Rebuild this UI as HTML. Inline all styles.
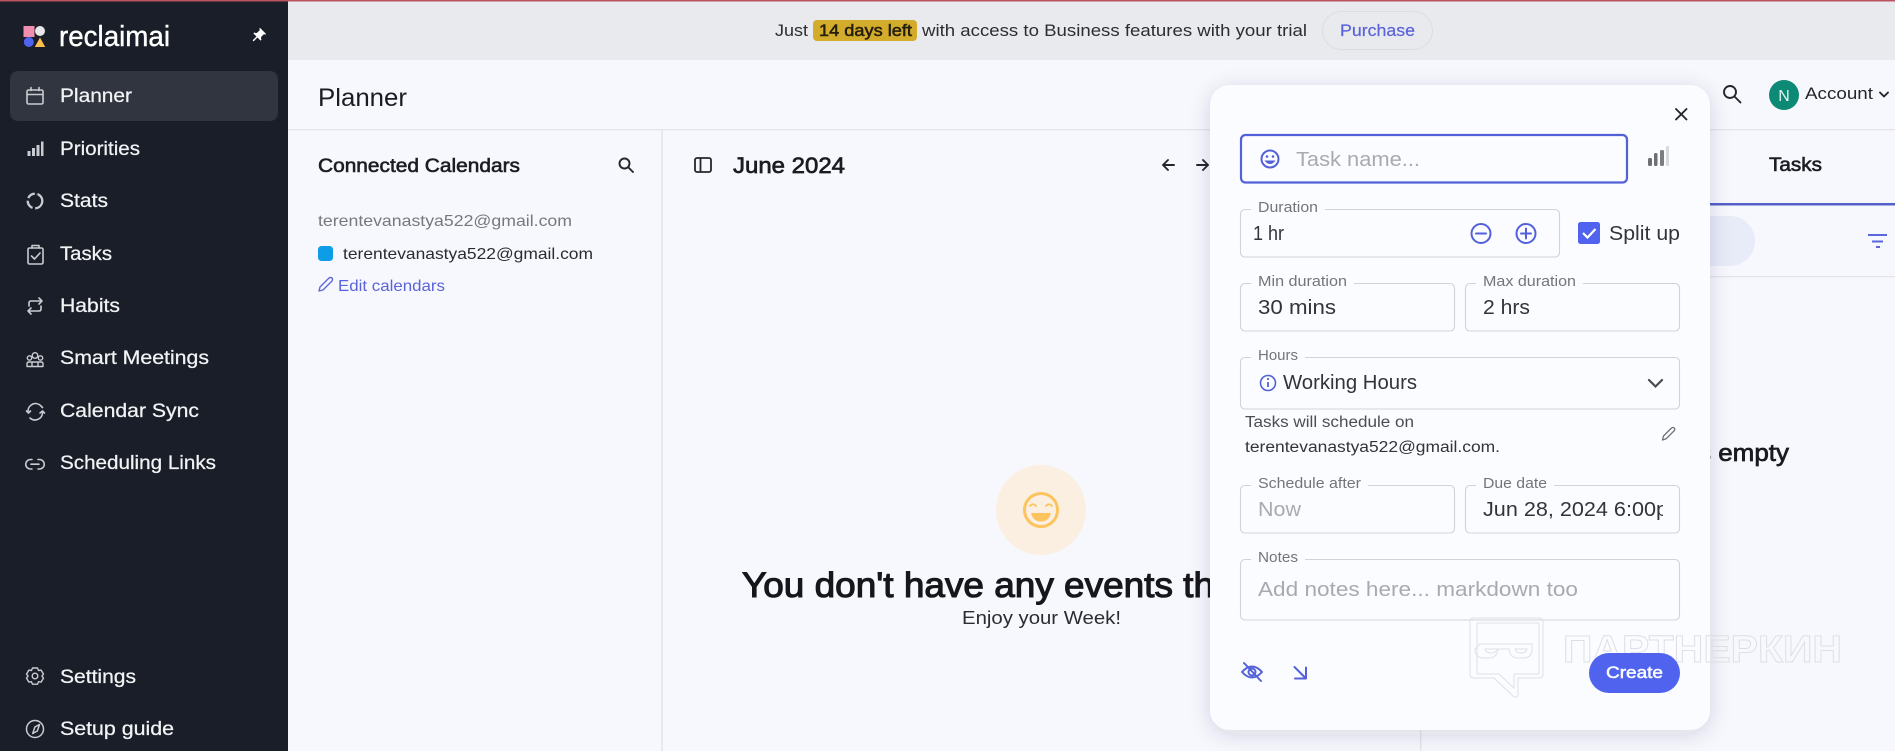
<!DOCTYPE html>
<html lang="en"><head><meta charset="utf-8"><title>Planner</title>
<style>
html,body{margin:0;padding:0;width:1895px;height:751px;overflow:hidden;background:#f7f8fd}
svg{position:absolute;left:0;top:0;display:block}
text{font-family:"Liberation Sans",sans-serif;white-space:pre}
.n{font-size:19.5px;fill:#f2f3f5;stroke:#f2f3f5;stroke-width:.25}
.l{font-size:15px;fill:#74757a}
.v{font-size:20.5px;fill:#33343a}
.g{font-size:20.5px;fill:#a9aaae}
.b{fill:none;stroke:#d2d3d7;stroke-width:1.1}
.si{fill:none;stroke:#c9cbd0;stroke-width:1.6;stroke-linecap:round;stroke-linejoin:round}
.bi{fill:none;stroke:#5361d8;stroke-width:2;stroke-linecap:round;stroke-linejoin:round}
.d{fill:none;stroke:#25262b;stroke-width:1.9;stroke-linecap:round;stroke-linejoin:round}
</style></head><body>
<svg width="1895" height="751" viewBox="0 0 1895 751" xmlns="http://www.w3.org/2000/svg">
<defs>
<filter id="sh" x="-15%" y="-15%" width="130%" height="130%"><feDropShadow dx="0" dy="4" stdDeviation="11" flood-color="#30364e" flood-opacity=".16"/></filter>
<clipPath id="dc"><rect x="1470" y="490" width="193" height="40"/></clipPath>
</defs>
<rect width="1895" height="751" fill="#f7f8fd"/>
<!-- banner -->
<rect x="288" y="0" width="1607" height="60" fill="#e9eaee"/>
<rect width="1895" height="1.5" fill="#bb5260"/>
<text x="775" y="36" font-size="17" fill="#2c2d33" textLength="33" lengthAdjust="spacingAndGlyphs">Just</text>
<rect x="813" y="20" width="104" height="21" rx="4" fill="#d4ac2c"/>
<text x="819" y="36" font-size="17" fill="#241f0c" stroke="#241f0c" stroke-width=".55" textLength="93" lengthAdjust="spacingAndGlyphs">14 days left</text>
<text x="922" y="36" font-size="17" fill="#2c2d33" textLength="385" lengthAdjust="spacingAndGlyphs">with access to Business features with your trial</text>
<rect x="1322.5" y="11.5" width="110" height="38" rx="19" fill="none" stroke="#dcdde3"/>
<text x="1340" y="36" font-size="17" fill="#5a63d8" stroke="#5a63d8" stroke-width=".2" textLength="75" lengthAdjust="spacingAndGlyphs">Purchase</text>
<!-- header -->
<text x="318" y="106" font-size="25" fill="#1b1c20" textLength="89" lengthAdjust="spacingAndGlyphs">Planner</text>
<rect x="288" y="129" width="1607" height="1.3" fill="#e4e5ea"/>
<g class="d"><circle cx="1730" cy="92" r="6"/><path d="M1734.500 96.500l6 6"/></g>
<circle cx="1784" cy="95" r="15" fill="#0c8a76"/>
<text x="1784" y="101" font-size="16" fill="#e6f5f2" text-anchor="middle">N</text>
<text x="1805" y="99" font-size="17" fill="#25262b" textLength="68" lengthAdjust="spacingAndGlyphs">Account</text>
<path d="M1880 92.500l4 4 4-4" class="d"/>
<!-- left calendars panel -->
<text x="318" y="172" font-size="19.500" fill="#1c1d22" stroke="#1c1d22" stroke-width=".6" textLength="202" lengthAdjust="spacingAndGlyphs">Connected Calendars</text>
<g class="d"><circle cx="624.500" cy="163.500" r="5"/><path d="M628.500 167.500l4.500 4.500"/></g>
<text x="318" y="226" font-size="16" fill="#77787d" textLength="254" lengthAdjust="spacingAndGlyphs">terentevanastya522@gmail.com</text>
<rect x="318" y="246" width="15" height="15" rx="3.500" fill="#0d9ce6"/>
<text x="343" y="259" font-size="16" fill="#2a2b30" textLength="250" lengthAdjust="spacingAndGlyphs">terentevanastya522@gmail.com</text>
<path d="M319 291l1-4 9-9q2-1 3 0t0 3l-9 9z" fill="none" stroke="#6068d8" stroke-width="1.400" stroke-linejoin="round"/>
<text x="338" y="291" font-size="16" fill="#5a63d8" textLength="107" lengthAdjust="spacingAndGlyphs">Edit calendars</text>
<rect x="661" y="130" width="2" height="621" fill="#e8e9ef"/>
<rect x="1420" y="700" width="1.500" height="51" fill="#e4e5ea"/>
<!-- center -->
<g fill="none" stroke="#25262b" stroke-width="1.800"><rect x="695" y="158" width="16" height="14" rx="2"/><path d="M700.500 158v14"/></g>
<text x="733" y="173" font-size="22.500" fill="#1b1c20" stroke="#1b1c20" stroke-width=".7" textLength="112" lengthAdjust="spacingAndGlyphs">June 2024</text>
<path d="M1174 165h-11m5-5l-5 5 5 5" class="d"/>
<path d="M1197 165h11m-5-5l5 5-5 5" class="d"/>
<circle cx="1041" cy="510" r="45" fill="#faefe0"/>
<g fill="none" stroke="#fdc35c" stroke-width="3" stroke-linecap="round"><circle cx="1041" cy="510" r="16.500"/></g>
<g fill="none" stroke="#fdc35c" stroke-width="1.800" stroke-linecap="round"><path d="M1030 506q3-3.500 6 0M1046 506q3-3.500 6 0"/></g>
<path d="M1031 513h20q-2 8.500-10 8.500t-10-8.500z" fill="#fdc35c"/>
<text x="742" y="597" font-size="35" fill="#16171b" stroke="#16171b" stroke-width="1.100" textLength="472" lengthAdjust="spacingAndGlyphs">You don't have any events th</text>
<text x="962" y="624" font-size="18" fill="#2b2c31" textLength="159" lengthAdjust="spacingAndGlyphs">Enjoy your Week!</text>
<!-- right panel -->
<text x="1769" y="171" font-size="19" fill="#1c1d22" stroke="#1c1d22" stroke-width=".6" textLength="53" lengthAdjust="spacingAndGlyphs">Tasks</text>
<rect x="1600" y="203" width="295" height="2.500" fill="#5361c8"/>
<rect x="1500" y="216" width="255" height="50" rx="25" fill="#e8ebf8"/>
<path d="M1868 235h19M1872 241.500h11M1876 247h4" fill="none" stroke="#5a66dc" stroke-width="2"/>
<rect x="1600" y="276" width="295" height="1.300" fill="#e4e5ea"/>
<text x="1698" y="461" font-size="24" fill="#1a1b20" stroke="#1a1b20" stroke-width=".7" textLength="91" lengthAdjust="spacingAndGlyphs">s empty</text>
<!-- modal -->
<rect x="1210" y="85" width="500" height="645" rx="20" fill="#fbfcff" filter="url(#sh)"/>
<path d="M1676 109l10.500 10.500M1686.500 109l-10.500 10.500" class="d"/>
<rect x="1241" y="135" width="386" height="47.500" rx="4.500" fill="none" stroke="#5361d8" stroke-width="2.200"/>
<g class="bi"><circle cx="1270" cy="159" r="8.500"/></g>
<circle cx="1267" cy="156.500" r="1.300" fill="#5361d8"/><circle cx="1273" cy="156.500" r="1.300" fill="#5361d8"/>
<path d="M1265.500 161q4.500 5 9 0z" fill="#5361d8" stroke="#5361d8"/>
<text x="1296" y="166" class="g" textLength="124" lengthAdjust="spacingAndGlyphs">Task name...</text>
<g><rect x="1648" y="158" width="4" height="8" rx="1.500" fill="#6e6f73"/><rect x="1654" y="153" width="3.500" height="13" rx="1.500" fill="#6e6f73"/><rect x="1660" y="150" width="4" height="16" rx="1.500" fill="#7c7d81"/><rect x="1666" y="146" width="3" height="20" rx="1" fill="#d8d9dd"/></g>

<!-- Duration -->
<rect x="1240.500" y="209.500" width="319" height="47.500" rx="4.500" class="b"/>
<rect x="1251" y="205" width="74" height="8" fill="#fbfcff"/>
<text x="1258" y="212" class="l" textLength="60" lengthAdjust="spacingAndGlyphs">Duration</text>
<text x="1253" y="240" class="v" textLength="31" lengthAdjust="spacingAndGlyphs">1 hr</text>
<g class="bi"><circle cx="1481" cy="233.500" r="9.500"/><path d="M1476 233.500h10"/><circle cx="1526" cy="233.500" r="9.500"/><path d="M1521 233.500h10M1526 228.500v10"/></g>
<rect x="1578" y="222" width="22" height="22" rx="2.500" fill="#5062ee"/>
<path d="M1583 233l4.500 4.500 8-8.500" fill="none" stroke="#fff" stroke-width="2.200"/>
<text x="1609" y="240" class="v" textLength="71" lengthAdjust="spacingAndGlyphs">Split up</text>
<!-- Min / Max -->
<rect x="1240.500" y="283.500" width="214" height="47.500" rx="4.500" class="b"/>
<rect x="1251" y="279" width="103" height="8" fill="#fbfcff"/>
<text x="1258" y="286" class="l" textLength="89" lengthAdjust="spacingAndGlyphs">Min duration</text>
<text x="1258" y="314" class="v" textLength="78" lengthAdjust="spacingAndGlyphs">30 mins</text>
<rect x="1465.500" y="283.500" width="214" height="47.500" rx="4.500" class="b"/>
<rect x="1476" y="279" width="107" height="8" fill="#fbfcff"/>
<text x="1483" y="286" class="l" textLength="93" lengthAdjust="spacingAndGlyphs">Max duration</text>
<text x="1483" y="314" class="v" textLength="47" lengthAdjust="spacingAndGlyphs">2 hrs</text>
<!-- Hours -->
<rect x="1240.500" y="357.500" width="439" height="51.500" rx="4.500" class="b"/>
<rect x="1251" y="353" width="54" height="8" fill="#fbfcff"/>
<text x="1258" y="360" class="l" textLength="40" lengthAdjust="spacingAndGlyphs">Hours</text>
<circle cx="1268" cy="383" r="7.500" fill="none" stroke="#5361d8" stroke-width="1.600"/>
<path d="M1268 382v5" stroke="#5361d8" stroke-width="1.800"/><circle cx="1268" cy="379" r="1.100" fill="#5361d8"/>
<text x="1283" y="389" class="v" textLength="134" lengthAdjust="spacingAndGlyphs">Working Hours</text>
<path d="M1649 380l6.500 6.500 6.500-6.500" fill="none" stroke="#4a4b50" stroke-width="2.200" stroke-linecap="round"/>
<text x="1245" y="427" font-size="15.500" fill="#4c4d52" textLength="169" lengthAdjust="spacingAndGlyphs">Tasks will schedule on</text>
<text x="1245" y="452" font-size="15.500" fill="#33343a" textLength="255" lengthAdjust="spacingAndGlyphs">terentevanastya522@gmail.com.</text>
<path d="M1662.500 440l1-4 8-8q1.500-1 2.700 0t0 2.700l-8 8z" fill="none" stroke="#6f7075" stroke-width="1.300" stroke-linejoin="round"/>
<!-- Schedule / Due -->
<rect x="1240.500" y="485.500" width="214" height="47.500" rx="4.500" class="b"/>
<rect x="1251" y="481" width="117" height="8" fill="#fbfcff"/>
<text x="1258" y="488" class="l" textLength="103" lengthAdjust="spacingAndGlyphs">Schedule after</text>
<text x="1258" y="516" class="g" textLength="43" lengthAdjust="spacingAndGlyphs">Now</text>
<rect x="1465.500" y="485.500" width="214" height="47.500" rx="4.500" class="b"/>
<rect x="1476" y="481" width="78" height="8" fill="#fbfcff"/>
<text x="1483" y="488" class="l" textLength="64" lengthAdjust="spacingAndGlyphs">Due date</text>
<g clip-path="url(#dc)"><text x="1483" y="516" class="v" textLength="203" lengthAdjust="spacingAndGlyphs">Jun 28, 2024 6:00pm</text></g>
<!-- Notes -->
<rect x="1240.500" y="559.500" width="439" height="60.500" rx="4.500" class="b"/>
<rect x="1251" y="555" width="54" height="8" fill="#fbfcff"/>
<text x="1258" y="562" class="l" textLength="40" lengthAdjust="spacingAndGlyphs">Notes</text>
<text x="1258" y="596" class="g" textLength="320" lengthAdjust="spacingAndGlyphs">Add notes here... markdown too</text>
<!-- footer icons -->
<g class="bi"><path d="M1242 672q10-11 20 0q-10 11-20 0z"/><circle cx="1252" cy="672" r="3.500"/><path d="M1244 663l17 18"/></g>
<path d="M1294.500 667l11 11M1306 667.500v11h-11" class="bi"/>
<!-- watermark -->
<g fill="none" stroke="#dfe0e4" stroke-width="1">
<path d="M1474 618h65q4 0 4 4v52q0 4-4 4h-21v16q0 4-4 3l-20-19h-20q-4 0-4-4v-52q0-4 4-4z"/>
<path d="M1478 623h60q1 0 1 1v49q0 1-1 1h-24v14l-15-14h-21q-1 0-1-1v-49q0-1 1-1z"/>
<path d="M1480 644h52v5q0 9-9 9h-5q-8 0-9-9h-11q-1 9-9 9h-5q-9 0-9-9z"/>
<path d="M1485 649h12q-1 4-6 4t-6-4zM1515 649h12q-1 4-6 4t-6-4z"/>
</g>
<text x="1563" y="662" font-size="38" font-weight="700" fill="none" stroke="#dddee2" stroke-width=".9" textLength="279" lengthAdjust="spacingAndGlyphs">ПАРТНЕРКИН</text>
<rect x="1589" y="653" width="91" height="40" rx="20" fill="#4f63ee"/>
<text x="1606" y="678" font-size="17" fill="#fafbff" stroke="#fafbff" stroke-width=".55" textLength="57" lengthAdjust="spacingAndGlyphs">Create</text>

<!-- sidebar -->
<rect x="0" y="1.500" width="288" height="750" fill="#1a1e28"/>
<rect x="23.500" y="26" width="11" height="11" fill="#ee8fb0"/>
<circle cx="40" cy="31" r="5" fill="#e6e8ea"/>
<circle cx="28.800" cy="42" r="5" fill="#4f63ee"/>
<path d="M40 37.500l5.200 9.500h-10.400z" fill="#fcc14c"/>
<text x="59" y="46" font-size="29" fill="#fff" stroke="#fff" stroke-width=".4" textLength="111" lengthAdjust="spacingAndGlyphs">reclaimai</text>
<g transform="translate(258 36) rotate(45) scale(.72) translate(-12 -12)"><path d="M16 9V4h1c.55 0 1-.45 1-1s-.45-1-1-1H7c-.55 0-1 .45-1 1s.45 1 1 1h1v5c0 1.660-1.340 3-3 3v2h5.970v7l1 1 1-1v-7H19v-2c-1.660 0-3-1.340-3-3z" fill="#fff"/></g>
<rect x="10" y="71" width="268" height="50" rx="8" fill="#30353f"/>
<text x="60" y="102" class="n" textLength="72" lengthAdjust="spacingAndGlyphs">Planner</text>
<text x="60" y="155" class="n" textLength="80" lengthAdjust="spacingAndGlyphs">Priorities</text>
<text x="60" y="207" class="n" textLength="48" lengthAdjust="spacingAndGlyphs">Stats</text>
<text x="60" y="260" class="n" textLength="52" lengthAdjust="spacingAndGlyphs">Tasks</text>
<text x="60" y="312" class="n" textLength="60" lengthAdjust="spacingAndGlyphs">Habits</text>
<text x="60" y="364" class="n" textLength="149" lengthAdjust="spacingAndGlyphs">Smart Meetings</text>
<text x="60" y="417" class="n" textLength="139" lengthAdjust="spacingAndGlyphs">Calendar Sync</text>
<text x="60" y="469" class="n" textLength="156" lengthAdjust="spacingAndGlyphs">Scheduling Links</text>
<text x="60" y="683" class="n" textLength="76" lengthAdjust="spacingAndGlyphs">Settings</text>
<text x="60" y="735" class="n" textLength="114" lengthAdjust="spacingAndGlyphs">Setup guide</text>
<!-- sidebar icons -->
<g class="si"><rect x="27" y="90" width="16" height="14" rx="1.500"/><path d="M27 94.500h16M31 87.500v3M39 87.500v3"/></g>
<g fill="#c9cbd0"><rect x="27.500" y="151" width="3" height="5"/><rect x="32" y="148" width="3" height="8"/><rect x="36.500" y="145" width="3" height="11"/><rect x="41" y="141.500" width="2.500" height="14.500"/></g>
<circle cx="35" cy="201" r="7.300" fill="none" stroke="#c9cbd0" stroke-width="2.300" pathLength="100" stroke-dasharray="44 6 20 6 18 6" transform="rotate(-70 35 201)"/>
<g class="si"><rect x="28" y="248" width="15" height="16" rx="1.500"/><path d="M32 248v-2.500h7v2.500M31.500 256l3 3 5.500-6"/></g>
<g class="si"><path d="M29 306v-3q0-2 2-2h11m-3-3l3 3-3 3M41 306v3q0 2-2 2h-11m3 3l-3-3 3-3"/></g>
<g class="si" style="stroke-width:1.400"><circle cx="35" cy="355.500" r="2.800"/><circle cx="29.500" cy="358" r="2.200"/><circle cx="40.500" cy="358" r="2.200"/><path d="M27 366.500v-2.500q0-2 2-2h12q2 0 2 2v2.500zM32 366.500v-4.500M38 366.500v-4.500"/></g>
<g class="si"><path d="M28 411a7.500 7.500 0 0 1 12.500-5.500l2 2M42.500 413a7.500 7.500 0 0 1-12.500 5M26.500 411l2 2 2-2M40 413l2.500-2 2 2"/></g>
<g class="si"><path d="M32 459.500h-1.500a4.700 4.700 0 0 0 0 9.500h1.500M38 459.500h1.500a4.700 4.700 0 0 1 0 9.500h-1.500M31 464.200h8"/></g>
<g class="si" style="stroke-width:1.400"><circle cx="35" cy="676" r="2.800"/><path d="M32.500 668h5l1 2.500 2.600-.4 2.400 4-1.600 2 1.600 2-2.400 4-2.600-.4-1 2.500h-5l-1-2.500-2.600.4-2.400-4 1.600-2-1.600-2 2.400-4 2.600.4z"/></g>
<g class="si" style="stroke-width:1.500"><circle cx="35" cy="729" r="8.500"/><path d="M39.500 724.500l-2.200 6.500-4.600 2.500 2.200-6.500z"/></g>
</svg>
</body></html>
